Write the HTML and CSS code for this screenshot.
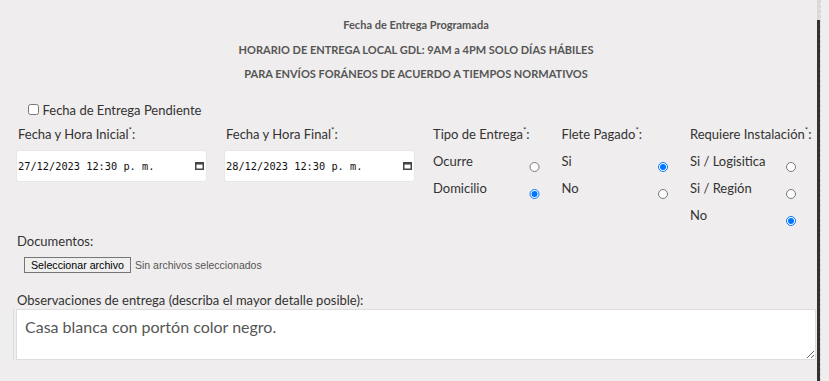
FILE: index.html
```html
<!DOCTYPE html>
<html lang="es">
<head>
    <meta charset="UTF-8">
    <meta name="viewport" content="width=device-width, initial-scale=1.0">
    <title>Entrega</title>
    <link rel="stylesheet" href="styles.css">
</head>
<body>
    <div class="page">
        <div class="panel">
            <div class="notice">
                <p>Fecha de Entrega Programada</p>
                <p>HORARIO DE ENTREGA LOCAL GDL: 9AM a 4PM SOLO DÍAS HÁBILES</p>
                <p>PARA ENVÍOS FORÁNEOS DE ACUERDO A TIEMPOS NORMATIVOS</p>
            </div>

            <label class="pending"><input type="checkbox" class="pending-check">Fecha de Entrega Pendiente</label>

            <div class="fields">
                <div class="col-date">
                    <div class="field-label">Fecha y Hora Inicial<sup>*</sup>:</div>
                    <div class="date-field">
                        <span>27/12/2023 12:30 p. m.</span>
                        <svg class="cal-icon" width="9" height="8" viewBox="0 0 9 8"><rect x="0.75" y="0.75" width="7.5" height="6.5" fill="none" stroke="#444" stroke-width="1.5"/><rect x="0.75" y="0.75" width="7.5" height="1.8" fill="#444"/></svg>
                    </div>
                </div>
                <div class="col-date">
                    <div class="field-label">Fecha y Hora Final<sup>*</sup>:</div>
                    <div class="date-field">
                        <span>28/12/2023 12:30 p. m.</span>
                        <svg class="cal-icon" width="9" height="8" viewBox="0 0 9 8"><rect x="0.75" y="0.75" width="7.5" height="6.5" fill="none" stroke="#444" stroke-width="1.5"/><rect x="0.75" y="0.75" width="7.5" height="1.8" fill="#444"/></svg>
                    </div>
                </div>
                <div class="col-radio">
                    <div class="field-label">Tipo de Entrega<sup>*</sup>:</div>
                    <label class="radio-row">Ocurre<input type="radio" name="tipo"></label>
                    <label class="radio-row">Domicilio<input type="radio" name="tipo" checked></label>
                </div>
                <div class="col-radio">
                    <div class="field-label">Flete Pagado<sup>*</sup>:</div>
                    <label class="radio-row">Si<input type="radio" name="flete" checked></label>
                    <label class="radio-row">No<input type="radio" name="flete"></label>
                </div>
                <div class="col-radio">
                    <div class="field-label nowrap">Requiere Instalación<sup>*</sup>:</div>
                    <label class="radio-row">Si / Logisitica<input type="radio" name="inst"></label>
                    <label class="radio-row">Si / Región<input type="radio" name="inst"></label>
                    <label class="radio-row">No<input type="radio" name="inst" checked></label>
                </div>
            </div>

            <div class="docs">
                <div class="field-label">Documentos:</div>
                <div class="file-picker">
                    <button type="button" class="file-button">Seleccionar archivo</button>
                    <span class="file-status">Sin archivos seleccionados</span>
                </div>
            </div>

            <div class="notes">
                <div class="field-label">Observaciones de entrega (describa el mayor detalle posible):</div>
                <div class="notes-box">
                    <textarea class="notes-input">Casa blanca con portón color negro.</textarea>
                </div>
            </div>
        </div>
        <div class="edge"></div>
    </div>
</body>
</html>
```

FILE: styles.css
```css
* {
    margin: 0;
    padding: 0;
    box-sizing: border-box;
}

body {
    font-family: Lato, "Noto Sans", sans-serif;
    background: #efeded;
    color: #333;
}

.page {
    display: flex;
    min-height: 100vh;
}

.panel {
    width: 817px;
    padding: 13px 0 0 16px;
}

.edge {
    width: 4px;
    background: linear-gradient(#dadada 0, #dadada 20px, #333 20px) no-repeat;
    background-size: 3px 100%;
    border-right: 1px dashed #d4d4d4;
}

.notice {
    text-align: center;
    font-size: 11px;
    font-weight: 700;
    color: #555;
    line-height: 24.5px;
    padding-right: 1px;
}

.pending {
    display: flex;
    align-items: center;
    margin-top: 13px;
    padding-left: 12px;
    font-size: 13px;
    line-height: 20px;
}

.pending-check {
    width: 10.5px;
    height: 10.5px;
    margin: 0 4px 0 0;
}

.fields {
    display: grid;
    grid-template-columns: 208px 208px 128.5px 128.5px 128px;
    margin-top: 4px;
}

.field-label {
    font-size: 13px;
    line-height: 20px;
    color: #333;
    padding-left: 1px;
}

.field-label sup {
    font-size: 8px;
    vertical-align: top;
    line-height: 12px;
}

.nowrap {
    white-space: nowrap;
}

.col-date .field-label,
.col-radio .field-label {
    margin-bottom: 7px;
}

.col-date {
    padding-left: 1px;
    padding-right: 18px;
}

.date-field {
    display: flex;
    align-items: center;
    justify-content: space-between;
    height: 30px;
    background: #fff;
    border-radius: 2px;
    box-shadow: 0 0 0 1px #e8e6e6;
    padding: 0 2px 0 1px;
    font-family: "DejaVu Sans Mono", monospace;
    font-size: 10.3px;
    color: #111;
}

.cal-icon {
    display: block;
}

.col-radio {
    padding-right: 15px;
}

.radio-row {
    display: flex;
    justify-content: space-between;
    align-items: flex-start;
    height: 27px;
    font-size: 13px;
    line-height: 20px;
    padding-left: 1px;
}

.radio-row input {
    width: 10.5px;
    height: 10.5px;
    margin: 11px 6px 0 0;
}

.docs {
    margin-top: -1px;
}

.file-picker {
    display: flex;
    align-items: center;
    margin-top: 6px;
    padding-left: 8px;
    font-family: "Liberation Sans", Arial, sans-serif;
    font-size: 10.5px;
}

.file-button {
    font-family: "Liberation Sans", Arial, sans-serif;
    font-size: 10.67px;
    line-height: 12px;
    padding: 1px 6px;
    border: 1px solid #767676;
    border-radius: 0;
    background: #efefef;
    color: #000;
}

.file-status {
    margin-left: 4px;
    color: #555;
}

.notes {
    margin-top: 19px;
}

.notes .field-label {
    line-height: 17px;
}

.notes-box {
    margin-left: -3px;
    padding-left: 2px;
    border-left: 1px solid #d3e0dc;
}

.notes-input {
    display: block;
    width: 800px;
    height: 51px;
    border: 1px solid #ddd;
    border-radius: 0;
    background: #fff;
    padding: 6px 8px;
    font-family: Lato, sans-serif;
    font-size: 16px;
    line-height: 22px;
    color: #555;
    resize: both;
    outline: none;
}
```
